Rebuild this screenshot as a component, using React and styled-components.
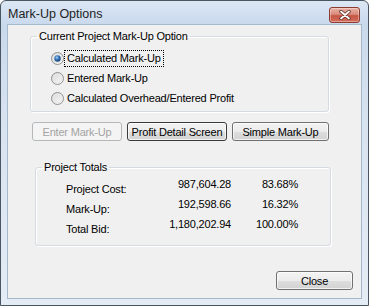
import React, { useState } from 'react';
import styled, { createGlobalStyle } from 'styled-components';

const GlobalStyle = createGlobalStyle`
  html, body {
    margin: 0;
    padding: 0;
    background: #ffffff;
  }
`;

// Window frame (Windows 7 basic look)
const Window = styled.div`
  width: 369px;
  height: 306px;
  box-sizing: border-box;
  border: 1px solid #4a5562;
  border-radius: 6px 6px 0 0;
  background: linear-gradient(#dbe7f4 0px, #c9d9ec 24px, #d8e3f0 120px, #e4ecf5 100%);
  display: flex;
  flex-direction: column;
  padding: 0 6px 6px 6px;
  font-family: 'Liberation Sans', Arial, sans-serif;
  letter-spacing: -0.2px;
`;

const TitleBar = styled.div`
  height: 23px;
  display: flex;
  align-items: center;
  justify-content: space-between;
  padding-left: 1px;
`;

const Title = styled.span`
  font-family: 'Liberation Sans', Arial, sans-serif;
  font-size: 12.5px;
  letter-spacing: 0;
  color: #1e1e1e;
  margin-top: 3px;
`;

const CloseX = styled.button`
  width: 31px;
  height: 16px;
  margin-top: 5px;
  margin-right: 2px;
  padding: 0;
  border: 1px solid #8d3a2f;
  border-radius: 3px;
  background: linear-gradient(#eab3a6 0%, #d88b7b 45%, #c65645 55%, #d56d5a 100%);
  box-shadow: inset 0 0 0 1px rgba(255, 255, 255, 0.35);
  display: flex;
  align-items: center;
  justify-content: center;
`;

const Client = styled.div`
  flex: 1;
  background: #f0f0f0;
  border: 1px solid #a6b8cc;
  display: flex;
  flex-direction: column;
  align-items: flex-start;
  font-size: 11px;
  color: #000;
`;

const Group = styled.fieldset`
  margin: ${(p) => p.$margin};
  width: ${(p) => p.$width}px;
  height: ${(p) => p.$height}px;
  box-sizing: border-box;
  padding: 0;
  border: 1px solid #d5dbe0;
  border-radius: 3px;
  box-shadow: inset 1px 1px 0 #ffffff, 1px 1px 0 #ffffff;
  min-width: 0;
`;

const Legend = styled.legend`
  margin-left: 6px;
  padding: 0 2px;
  font-size: 11px;
  line-height: 13px;
`;

const RadioList = styled.div`
  display: flex;
  flex-direction: column;
  padding: 5px 0 0 20px;
`;

const RadioRow = styled.label`
  height: 20px;
  display: flex;
  align-items: center;
  gap: 0;
`;

const RadioText = styled.span`
  padding: 1px 2px;
  line-height: 13px;
  border: 1px dotted ${(p) => (p.$focus ? '#000' : 'transparent')};
`;

const ButtonRow = styled.div`
  display: flex;
  gap: 5px;
  margin: 10px 0 0 24px;
`;

const Button = styled.button`
  width: ${(p) => p.$width}px;
  height: 19px;
  padding: 0;
  font-family: 'Liberation Sans', Arial, sans-serif;
  font-size: 11px;
  letter-spacing: -0.2px;
  color: ${(p) => (p.disabled ? '#a3a3a3' : '#000')};
  border: 1px solid ${(p) => (p.disabled ? '#b4b8bb' : p.$default ? '#3a3a3a' : '#707070')};
  border-radius: 3px;
  background: ${(p) =>
    p.disabled
      ? '#f4f4f4'
      : 'linear-gradient(#f3f3f3 0%, #ececec 50%, #dedede 51%, #d2d2d2 100%)'};
  box-shadow: ${(p) => (p.disabled ? 'none' : 'inset 0 0 0 1px rgba(255,255,255,0.7)')};
`;

const Totals = styled.div`
  display: grid;
  grid-template-columns: 85px 80px 67px;
  grid-auto-rows: 20px;
  padding-left: 30px;
`;

const Label = styled.span`
  margin-top: 5px;
  line-height: 20px;
`;

const Num = styled.span`
  text-align: right;
  line-height: 20px;
`;

const Footer = styled.div`
  align-self: flex-end;
  margin: 25px 8px 0 0;
`;

const RadioIcon = ({ checked }) => (
  <svg width="13" height="13" viewBox="0 0 13 13">
    <defs>
      <linearGradient id="rbg" x1="0" y1="0" x2="1" y2="1">
        <stop offset="0" stopColor="#d6d6d6" />
        <stop offset="1" stopColor="#fbfbfb" />
      </linearGradient>
      <radialGradient id="rdot" cx="0.4" cy="0.35" r="0.7">
        <stop offset="0" stopColor="#a7d3f5" />
        <stop offset="0.5" stopColor="#2d6fb5" />
        <stop offset="1" stopColor="#17386a" />
      </radialGradient>
    </defs>
    <circle cx="6.5" cy="6.5" r="6" fill="url(#rbg)" stroke="#8f9192" strokeWidth="1" />
    <circle cx="6.5" cy="6.5" r="4.2" fill="none" stroke="#e8e8e8" strokeWidth="1" />
    {checked && <circle cx="6.5" cy="6.5" r="3.2" fill="url(#rdot)" />}
  </svg>
);

const options = [
  'Calculated Mark-Up',
  'Entered Mark-Up',
  'Calculated Overhead/Entered Profit',
];

const totals = [
  ['Project Cost:', '987,604.28', '83.68%'],
  ['Mark-Up:', '192,598.66', '16.32%'],
  ['Total Bid:', '1,180,202.94', '100.00%'],
];

const App = () => {
  const [selected, setSelected] = useState(0);

  return (
    <>
      <GlobalStyle />
      <Window>
        <TitleBar>
          <Title>Mark-Up Options</Title>
          <CloseX aria-label="Close">
            <svg width="12" height="10" viewBox="0 0 12 10">
              <path d="M2 1.5 L10 8.5 M10 1.5 L2 8.5" stroke="#5a2a22" strokeWidth="3.4" strokeLinecap="round" />
              <path d="M2 1.5 L10 8.5 M10 1.5 L2 8.5" stroke="#ffffff" strokeWidth="1.8" strokeLinecap="round" />
            </svg>
          </CloseX>
        </TitleBar>
        <Client>
          <Group $margin="5px 0 0 22px" $width={299} $height={82}>
            <Legend>Current Project Mark-Up Option</Legend>
            <RadioList>
              {options.map((o, i) => (
                <RadioRow key={o} onClick={() => setSelected(i)}>
                  <RadioIcon checked={selected === i} />
                  <RadioText $focus={selected === i}>{o}</RadioText>
                </RadioRow>
              ))}
            </RadioList>
          </Group>

          <ButtonRow>
            <Button $width={90} disabled>Enter Mark-Up</Button>
            <Button $width={100} $default>Profit Detail Screen</Button>
            <Button $width={97}>Simple Mark-Up</Button>
          </ButtonRow>

          <Group $margin="20px 0 0 27px" $width={296} $height={85}>
            <Legend>Project Totals</Legend>
            <Totals>
              {totals.map(([l, v, p]) => (
                <React.Fragment key={l}>
                  <Label>{l}</Label>
                  <Num>{v}</Num>
                  <Num>{p}</Num>
                </React.Fragment>
              ))}
            </Totals>
          </Group>

          <Footer>
            <Button $width={77}>Close</Button>
          </Footer>
        </Client>
      </Window>
    </>
  );
};

export default App;
